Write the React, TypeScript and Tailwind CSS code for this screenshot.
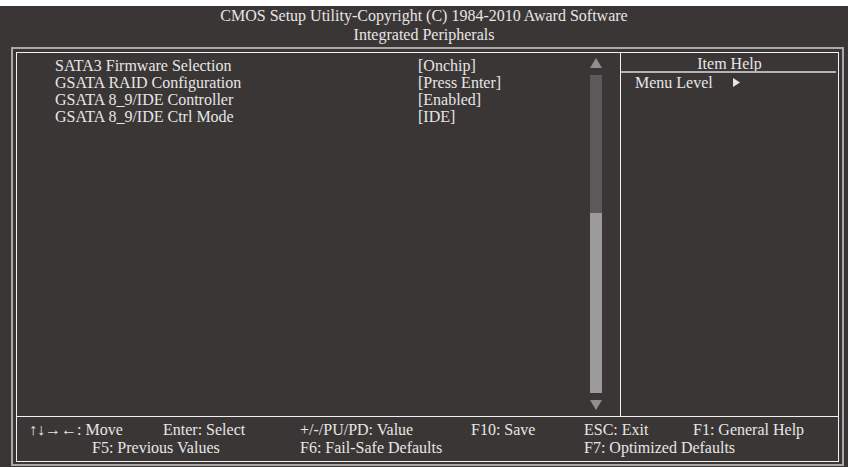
const items = [
  { label: "SATA3 Firmware Selection", value: "[Onchip]" },
  { label: "GSATA RAID Configuration", value: "[Press Enter]" },
  { label: "GSATA 8_9/IDE Controller", value: "[Enabled]" },
  { label: "GSATA 8_9/IDE Ctrl Mode", value: "[IDE]" },
];

function Arrow({ dir }: { dir: "up" | "down" }) {
  return (
    <svg width="12" height="10" viewBox="0 0 12 10" className="block">
      <polygon
        points={dir === "up" ? "6,0 12,10 0,10" : "0,0 12,0 6,10"}
        fill="#8f8f8f"
      />
    </svg>
  );
}

export default function App() {
  return (
    <div className="w-[848px] h-[467px] bg-white pt-[6px] font-['Liberation_Serif',serif] text-[16px] text-[#e6e6e6]">
      <div className="h-[461px] bg-[#3a3635] flex flex-col">
        {/* title */}
        <div className="h-[41px] text-center leading-[19px]">
          <div>CMOS Setup Utility-Copyright (C) 1984-2010 Award Software</div>
          <div>Integrated Peripherals</div>
        </div>

        {/* double frame */}
        <div className="ml-[11px] mr-[4px] border-2 border-[#a9a9a9] px-[3px] pt-[3px] pb-[2px]">
          <div className="h-[410px] border border-[#f2f2f2] flex flex-col">
            <div className="h-[363px] flex">
              {/* settings list */}
              <div className="flex-1 flex">
                <div className="flex-1 pl-[38px] pt-[4px] leading-[17px]">
                  {items.map((it) => (
                    <div key={it.label} className="grid grid-cols-[363px_1fr]">
                      <span>{it.label}</span>
                      <span>{it.value}</span>
                    </div>
                  ))}
                </div>
                <div className="w-[12px] mr-[18px] pt-[5px] flex flex-col">
                  <Arrow dir="up" />
                  <div className="mt-[7px] h-[138px] bg-[#5b595a]" />
                  <div className="h-[180px] bg-[#9b9b9c]" />
                  <div className="mt-[7px]">
                    <Arrow dir="down" />
                  </div>
                </div>
              </div>

              {/* item help */}
              <div className="w-[218px] border-l border-[#f2f2f2] flex flex-col">
                <div className="h-[18px] pt-[2px] leading-[17px] text-center">Item Help</div>
                <div className="h-[2px] mr-[2px] bg-[#b3b3b3]" />
                <div className="pl-[14px] pt-[1px] leading-[17px] flex items-center">
                  <span>Menu Level</span>
                  <svg width="7" height="9" viewBox="0 0 7 9" className="ml-[20px]">
                    <polygon points="0,0 7,4.5 0,9" fill="#e6e6e6" />
                  </svg>
                </div>
              </div>
            </div>

            {/* key legend */}
            <div className="flex-1 border-t border-[#f2f2f2] pt-[4px] leading-[18px]">
              <div className="flex pl-[12px]">
                <span className="w-[134px]">↑↓→←: Move</span>
                <span className="w-[137px]">Enter: Select</span>
                <span className="w-[171px]">+/-/PU/PD: Value</span>
                <span className="w-[113px]">F10: Save</span>
                <span className="w-[109px]">ESC: Exit</span>
                <span>F1: General Help</span>
              </div>
              <div className="flex pl-[75px]">
                <span className="w-[208px]">F5: Previous Values</span>
                <span className="w-[284px]">F6: Fail-Safe Defaults</span>
                <span>F7: Optimized Defaults</span>
              </div>
            </div>
          </div>
        </div>
      </div>
    </div>
  );
}
